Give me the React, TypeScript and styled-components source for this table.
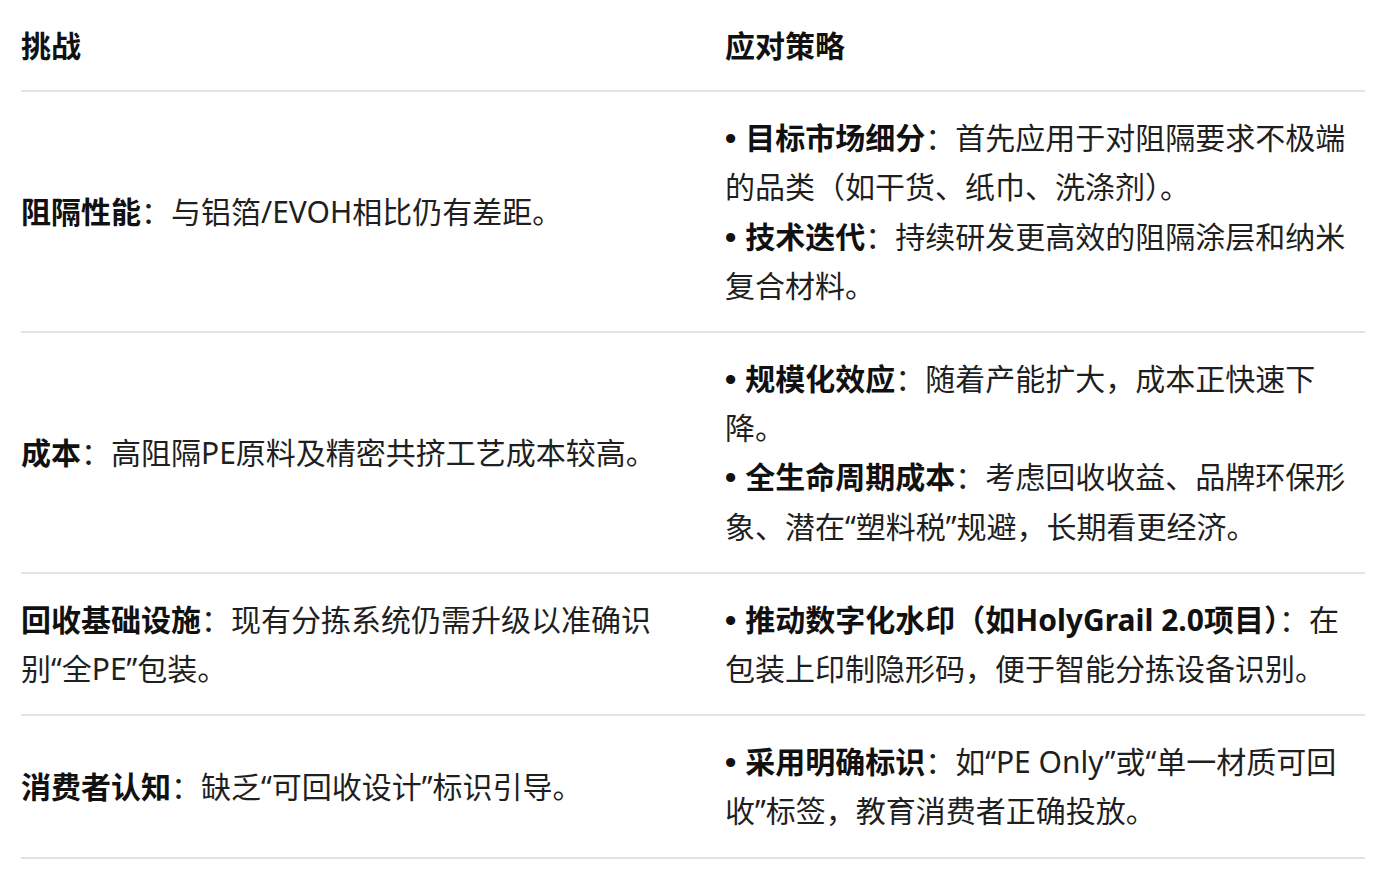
import React, { FC } from "react";
import styled, { createGlobalStyle } from "styled-components";

const GlobalStyle = createGlobalStyle`
  body {
    margin: 0;
    background: #ffffff;
    font-family: "Noto Sans", "Noto Sans CJK SC", sans-serif;
    color: #1f1f1f;
  }
`;

const Table = styled.div`
  margin-left: 21px;
  width: 1344px;
  display: grid;
  grid-template-columns: 1fr 1fr;
`;

const Cell = styled.div<{ $side: "left" | "right"; $head?: boolean }>`
  display: flex;
  flex-direction: column;
  justify-content: center;
  box-sizing: border-box;
  padding-top: ${(p) => (p.$head ? "21px" : "21px")};
  padding-bottom: ${(p) => (p.$head ? "20px" : "21px")};
  padding-left: ${(p) => (p.$side === "left" ? "0" : "32px")};
  padding-right: ${(p) => (p.$side === "left" ? "32px" : "0")};
  border-bottom: 2px solid #e3e3e3;
  font-size: 30px;
  line-height: 49.2px;
  font-weight: ${(p) => (p.$head ? 700 : 400)};
  color: ${(p) => (p.$head ? "#111111" : "#1f1f1f")};
`;

const Point = styled.div`
  margin: 0;
`;

const Bullet = styled.span`
  font-family: "Liberation Sans", Arial, sans-serif;
  font-weight: 700;
  font-size: 32px;
  line-height: 0;
  color: #111111;
  margin-right: 9px;
`;

const Strong = styled.strong`
  font-weight: 700;
  color: #111111;
`;

type Item = { title: string; text: string };
type Row = { problem: Item; answers: Item[] };

const rows: Row[] = [
  {
    problem: { title: "阻隔性能", text: "：与铝箔/EVOH相比仍有差距。" },
    answers: [
      { title: "目标市场细分", text: "：首先应用于对阻隔要求不极端的品类（如干货、纸巾、洗涤剂）。" },
      { title: "技术迭代", text: "：持续研发更高效的阻隔涂层和纳米复合材料。" },
    ],
  },
  {
    problem: { title: "成本", text: "：高阻隔PE原料及精密共挤工艺成本较高。" },
    answers: [
      { title: "规模化效应", text: "：随着产能扩大，成本正快速下降。" },
      { title: "全生命周期成本", text: "：考虑回收收益、品牌环保形象、潜在“塑料税”规避，长期看更经济。" },
    ],
  },
  {
    problem: { title: "回收基础设施", text: "：现有分拣系统仍需升级以准确识别“全PE”包装。" },
    answers: [
      { title: "推动数字化水印（如HolyGrail 2.0项目）", text: "：在包装上印制隐形码，便于智能分拣设备识别。" },
    ],
  },
  {
    problem: { title: "消费者认知", text: "：缺乏“可回收设计”标识引导。" },
    answers: [
      { title: "采用明确标识", text: "：如“PE Only”或“单一材质可回收”标签，教育消费者正确投放。" },
    ],
  },
];

const App: FC = () => {
  return (
    <>
      <GlobalStyle />
      <Table>
        <Cell $side="left" $head>
          挑战
        </Cell>
        <Cell $side="right" $head>
          应对策略
        </Cell>
        {rows.map((r, i) => (
          <React.Fragment key={i}>
            <Cell $side="left">
              <Point>
                <Strong>{r.problem.title}</Strong>
                {r.problem.text}
              </Point>
            </Cell>
            <Cell $side="right">
              {r.answers.map((a, j) => (
                <Point key={j}>
                  <Bullet>•</Bullet>
                  <Strong>{a.title}</Strong>
                  {a.text}
                </Point>
              ))}
            </Cell>
          </React.Fragment>
        ))}
      </Table>
    </>
  );
};

export default App;
